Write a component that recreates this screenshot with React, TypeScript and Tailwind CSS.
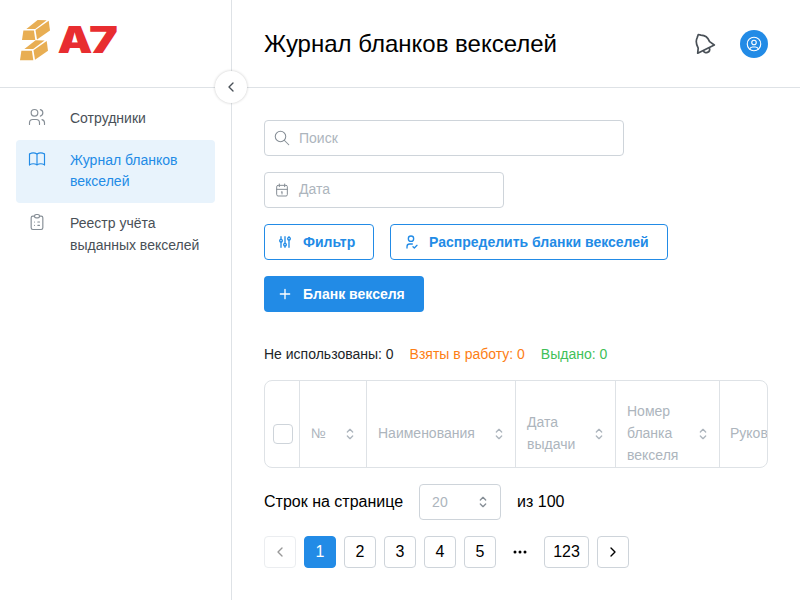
import React from 'react';

type IconProps = { size?: number; stroke?: number; className?: string; children?: React.ReactNode };

function Icon({ size = 20, stroke = 1, className = '', children }: IconProps) {
  return (
    <svg width={size} height={size} viewBox="0 0 24 24" fill="none" stroke="currentColor" strokeWidth={stroke} strokeLinecap="round" strokeLinejoin="round" className={'shrink-0 ' + className}>
      {children}
    </svg>
  );
}

function GoldBar({ x, y }: { x: number; y: number }) {
  return (
    <g transform={`translate(${x} ${y})`} fill="#e8ae53">
      <path d="M4.4 8.9 L15.6 0 L24.6 .2 L13.2 8.9Z" />
      <path d="M1.4 10.5 H11.9 L13.3 20 H0Z" />
      <path d="M13.5 10 L26.7 .8 L28 10.6 L15 19.5Z" />
    </g>
  );
}

function Logo() {
  return (
    <svg width="110" height="44" viewBox="0 0 110 44" className="block overflow-visible" role="img">
      <GoldBar x={2} y={0} />
      <GoldBar x={0} y={20.2} />
      <g fill="#e82d30" className="font-['Inter',sans-serif] text-[37px] font-black">
        <text x="37.4" y="33" textLength="35" lengthAdjust="spacingAndGlyphs">A</text>
        <text x="69" y="33" textLength="29" lengthAdjust="spacingAndGlyphs">7</text>
      </g>
    </svg>
  );
}

function Selector({ size = 16, className = '' }: { size?: number; className?: string }) {
  return (
    <Icon size={size} stroke={2} className={className}>
      <path d="M8 9l4 -4l4 4" />
      <path d="M16 15l-4 4l-4 -4" />
    </Icon>
  );
}

const usersIcon = (
  <>
    <path d="M9 7m-4 0a4 4 0 1 0 8 0a4 4 0 1 0 -8 0" />
    <path d="M3 21v-2a4 4 0 0 1 4 -4h4a4 4 0 0 1 4 4v2" />
    <path d="M16 3.13a4 4 0 0 1 0 7.75" />
    <path d="M21 21v-2a4 4 0 0 0 -3 -3.85" />
  </>
);
const bookIcon = (
  <>
    <path d="M3 19a9 9 0 0 1 9 0a9 9 0 0 1 9 0" />
    <path d="M3 6a9 9 0 0 1 9 0a9 9 0 0 1 9 0" />
    <path d="M3 6v13M12 6v13M21 6v13" />
  </>
);
const clipboardIcon = (
  <>
    <path d="M9 5h-2a2 2 0 0 0 -2 2v12a2 2 0 0 0 2 2h10a2 2 0 0 0 2 -2v-12a2 2 0 0 0 -2 -2h-2" />
    <path d="M9 5a2 2 0 0 1 2 -2h2a2 2 0 0 1 2 2a2 2 0 0 1 -2 2h-2a2 2 0 0 1 -2 -2" />
    <path d="M9 12h.01M13 12h2M9 16h.01M13 16h2" />
  </>
);

function NavItem({ icon, label, active = false }: { icon: React.ReactNode; label: React.ReactNode; active?: boolean }) {
  return (
    <div className={'flex rounded px-[11px] py-[10px] text-[14px] leading-[21.7px] ' + (active ? 'bg-[#e8f3fc] text-[#228be6]' : 'text-[#495057]')}>
      <Icon size={20} stroke={1.4} className={'-mt-px ' + (active ? '' : 'text-[#868e96]')}>{icon}</Icon>
      <span className="ml-[23px]">{label}</span>
    </div>
  );
}

function HeadCell({ label, width }: { label: React.ReactNode; width: string }) {
  return (
    <div className={'flex shrink-0 items-center justify-between border-r border-[#dee2e6] pt-5 pl-[11px] pr-2 ' + width}>
      <span>{label}</span>
      <Selector className="mb-px" />
    </div>
  );
}

function PageButton({ children, active = false, wide = false, disabled = false }: { children: React.ReactNode; active?: boolean; wide?: boolean; disabled?: boolean }) {
  return (
    <button className={'flex h-8 shrink-0 items-center justify-center rounded border text-[16px] leading-none ' + (wide ? 'w-[45px] ' : 'w-8 ') + (active ? 'border-[#228be6] bg-[#228be6] text-white' : 'border-[#ced4da] text-black') + (disabled ? ' opacity-40' : '')}>
      {children}
    </button>
  );
}

export default function App() {
  return (
    <div className="relative flex h-[600px] w-[800px] overflow-hidden bg-white font-['Liberation_Sans',Arial,sans-serif] text-[14px] text-black">
      <aside className="w-[232px] shrink-0 border-r border-[#dee2e6]">
        <div className="h-[88px] border-b border-[#dee2e6] pl-5 pt-5">
          <Logo />
        </div>
        <nav className="flex flex-col px-4 pt-[10px]">
          <NavItem icon={usersIcon} label="Сотрудники" />
          <NavItem icon={bookIcon} active label={<>Журнал бланков<br />векселей</>} />
          <NavItem icon={clipboardIcon} label={<>Реестр учёта<br />выданных векселей</>} />
        </nav>
      </aside>

      <button className="absolute left-[215px] top-[71px] flex h-8 w-8 items-center justify-center rounded-full bg-white text-[#495057] shadow-[0_0_3px_rgba(0,0,0,0.22)]">
        <Icon size={16} stroke={2}><path d="M15 6l-6 6l6 6" /></Icon>
      </button>

      <div className="min-w-0 flex-1">
        <header className="flex h-[88px] items-center justify-between border-b border-[#dee2e6] px-8">
          <h1 className="text-[24px] leading-9">Журнал бланков векселей</h1>
          <div className="flex items-center gap-[23px]">
            <svg width="22" height="22" viewBox="0 0 22 22" fill="none" stroke="#495057" strokeWidth="1.7" strokeLinejoin="round" strokeLinecap="round">
              <path d="M2.7 20.2 L3.2 15.2 Q-.1 9.2 2.2 4.6 L3.3 1.5 L5.9 2.1 Q12.2 2.2 14.6 8.6 L19.3 12 Z" />
              <path d="M8.4 17.8 C9.6 21.4 15.9 19.4 14.4 14.9" />
            </svg>
            <div className="flex size-7 items-center justify-center rounded-full bg-[#228be6] text-white">
              <Icon size={18} stroke={1.5}>
                <circle cx="12" cy="12" r="9" />
                <circle cx="12" cy="10" r="3" />
                <path d="M6.168 18.849a4 4 0 0 1 3.832 -2.849h4a4 4 0 0 1 3.834 2.855" />
              </Icon>
            </div>
          </div>
        </header>

        <main className="flex flex-col items-start px-8 pt-8">
          <div className="flex h-9 w-[360px] items-center rounded border border-[#ced4da] pl-2 text-[#adb5bd]">
            <Icon size={18} className="text-[#868e96]" stroke={1.4}>
              <path d="M10 10m-7 0a7 7 0 1 0 14 0a7 7 0 1 0 -14 0" />
              <path d="M21 21l-6 -6" />
            </Icon>
            <span className="ml-2">Поиск</span>
          </div>
          <div className="mt-4 flex h-9 w-60 items-center rounded border border-[#ced4da] pl-[9px] text-[#adb5bd]">
            <Icon size={16} className="text-[#868e96]" stroke={1.5}>
              <path d="M4 5m0 2a2 2 0 0 1 2 -2h12a2 2 0 0 1 2 2v12a2 2 0 0 1 -2 2h-12a2 2 0 0 1 -2 -2z" />
              <path d="M16 3v4M8 3v4M4 11h16M11 15h1M12 15v3" />
            </Icon>
            <span className="ml-[9px] pb-[2px]">Дата</span>
          </div>
          <div className="mt-4 flex gap-4 font-bold text-[#228be6]">
            <button className="flex h-9 w-[110px] items-center rounded border border-[#228be6] pl-3">
              <Icon size={16} stroke={2}>
                <circle cx="6" cy="10" r="2" /><path d="M6 4v4M6 12v8" />
                <circle cx="12" cy="16" r="2" /><path d="M12 4v10M12 18v2" />
                <circle cx="18" cy="7" r="2" /><path d="M18 4v1M18 9v11" />
              </Icon>
              <span className="ml-[10px]">Фильтр</span>
            </button>
            <button className="flex h-9 w-[278px] items-center rounded border border-[#228be6] pl-3">
              <Icon size={16} stroke={2}>
                <path d="M8 7a4 4 0 1 0 8 0a4 4 0 0 0 -8 0" />
                <path d="M6 21v-2a4 4 0 0 1 4 -4h4" />
                <path d="M15 19l2 2l4 -4" />
              </Icon>
              <span className="ml-[10px]">Распределить бланки векселей</span>
            </button>
          </div>
          <button className="mt-4 flex h-9 w-40 items-center rounded bg-[#228be6] pl-[13px] font-bold text-white">
            <Icon size={16} stroke={2}><path d="M12 5v14M5 12h14" /></Icon>
            <span className="ml-[10px]">Бланк векселя</span>
          </button>

          <div className="mt-8 flex gap-4 leading-[21px]">
            <span className="text-[#212529]">Не использованы: 0</span>
            <span className="text-[#fd7e14]">Взяты в работу: 0</span>
            <span className="text-[#40c057]">Выдано: 0</span>
          </div>

          <div className="mt-[15px] flex h-[88px] w-[504px] overflow-hidden rounded-lg border border-[#dee2e6] leading-[21.7px] text-[#adb5bd]">
            <div className="flex w-[35px] shrink-0 items-center border-r border-[#dee2e6] pl-2 pt-5">
              <span className="size-5 rounded border border-[#ced4da]" />
            </div>
            <HeadCell width="w-[67px]" label="№" />
            <HeadCell width="w-[149px]" label="Наименования" />
            <HeadCell width="w-[100px]" label={<>Дата<br />выдачи</>} />
            <HeadCell width="w-[104px]" label={<>Номер<br />бланка<br />векселя</>} />
            <div className="flex items-center whitespace-nowrap pl-[10px] pt-5">Руководитель</div>
          </div>

          <div className="mt-4 flex h-9 items-center gap-4 text-[16px]">
            <span>Строк на странице</span>
            <div className="flex h-9 w-[82px] items-center justify-between rounded border border-[#ced4da] pl-3 pr-[9px] text-[14px] text-[#adb5bd]">
              <span>20</span>
              <Selector className="text-[#868e96]" />
            </div>
            <span>из 100</span>
          </div>

          <div className="mt-4 flex items-center gap-2">
            <PageButton disabled><Icon size={16} stroke={2}><path d="M15 6l-6 6l6 6" /></Icon></PageButton>
            <PageButton active>1</PageButton>
            <PageButton>2</PageButton>
            <PageButton>3</PageButton>
            <PageButton>4</PageButton>
            <PageButton>5</PageButton>
            <div className="flex h-8 w-8 items-center justify-center">
              <svg width="16" height="4" viewBox="0 0 16 4"><circle cx="3" cy="2" r="1.5" /><circle cx="8" cy="2" r="1.5" /><circle cx="13" cy="2" r="1.5" /></svg>
            </div>
            <PageButton wide>123</PageButton>
            <PageButton><Icon size={16} stroke={2}><path d="M9 6l6 6l-6 6" /></Icon></PageButton>
          </div>
        </main>
      </div>
    </div>
  );
}
